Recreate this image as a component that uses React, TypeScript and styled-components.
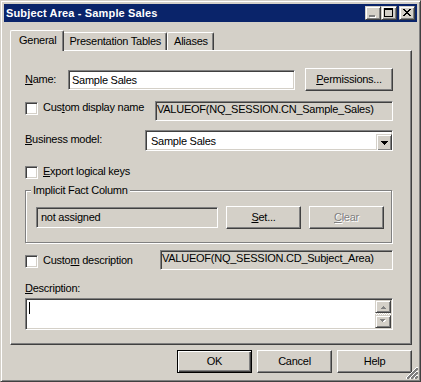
import React from "react";
import styled, { createGlobalStyle, css } from "styled-components";

const FACE = "#D4D0C8";
const SHADOW = "#808080";
const DARK = "#404040";

const GlobalStyle = createGlobalStyle`
  html, body { margin: 0; padding: 0; background: ${FACE}; }
  body {
    font-family: "Liberation Sans", Arial, sans-serif;
    font-size: 11px;
    line-height: 13px;
    letter-spacing: -0.25px;
    color: #000;
  }
  *, *::before, *::after { box-sizing: border-box; }
`;

const raisedBtn = css`
  border: 1px solid;
  border-color: #fff ${DARK} ${DARK} #fff;
  box-shadow: inset -1px -1px ${SHADOW};
`;

const raisedSmall = css`
  border: 1px solid;
  border-color: ${FACE} ${DARK} ${DARK} ${FACE};
  box-shadow: inset 1px 1px #fff, inset -1px -1px ${SHADOW};
`;

const sunken = css`
  border: 1px solid;
  border-color: ${SHADOW} #fff #fff ${SHADOW};
  box-shadow: inset 1px 1px ${DARK}, inset -1px -1px ${FACE};
`;

const Window = styled.div`
  position: relative;
  width: 421px;
  height: 382px;
  background: ${FACE};
  border: 1px solid;
  border-color: ${FACE} ${DARK} ${DARK} ${FACE};
  box-shadow: inset 1px 1px #fff, inset -1px -1px ${SHADOW};
  padding: 3px;
  display: flex;
  flex-direction: column;
`;

const TitleBar = styled.div`
  height: 18px;
  flex: none;
  background: #0a246a;
  display: flex;
  align-items: center;
  padding: 0 2px;
`;

const Title = styled.span`
  flex: 1;
  color: #fff;
  font-weight: bold;
  font-size: 11px;
  letter-spacing: 0.15px;
  white-space: nowrap;
`;

const CaptionBtn = styled.div<{ $ml?: number }>`
  width: 16px;
  height: 14px;
  margin-left: ${(p) => p.$ml ?? 0}px;
  background: ${FACE};
  ${raisedSmall}
  svg { display: block; }
`;

const Body = styled.div`
  flex: 1;
  display: flex;
  flex-direction: column;
  padding: 8px 5px 5px 6px;
`;

const TabStrip = styled.div`
  position: relative;
  z-index: 1;
  display: flex;
  align-items: flex-end;
  height: 20px;
  padding-left: 2px;
  flex: none;
`;

const Tab = styled.div<{ $active?: boolean }>`
  position: relative;
  height: 18px;
  padding: 0 5px 0 6px;
  display: flex;
  align-items: center;
  white-space: nowrap;
  background: ${FACE};
  border-top: 1px solid #fff;
  border-left: 1px solid #fff;
  border-right: 1px solid ${DARK};
  box-shadow: inset -1px 0 ${SHADOW};
  border-radius: 2px 2px 0 0;
  ${(p) =>
    p.$active &&
    css`
      z-index: 2;
      height: 21px;
      margin: 0 -2px -1px -2px;
      padding: 0 7px 2px 8px;
    `}
`;

const Panel = styled.div`
  height: 295px;
  flex: none;
  border: 1px solid;
  border-color: #fff ${DARK} ${DARK} #fff;
  box-shadow: inset -1px -1px ${SHADOW};
  padding: 17px 18px 0 14px;
  display: flex;
  flex-direction: column;
`;

const Row = styled.div<{ $mt: number; $h: number; $align?: string }>`
  display: flex;
  align-items: ${(p) => p.$align ?? "center"};
  margin-top: ${(p) => p.$mt}px;
  height: ${(p) => p.$h}px;
  flex: none;
`;

const Label = styled.div<{ $w?: number; $mt?: number }>`
  width: ${(p) => (p.$w ? `${p.$w}px` : "auto")};
  flex: none;
  white-space: nowrap;
  margin-top: ${(p) => p.$mt ?? 0}px;
`;

const Field = styled.div<{ $w?: number; $h: number; $white?: boolean; $pl: number; $pt?: number }>`
  ${sunken}
  flex: ${(p) => (p.$w ? "none" : "1")};
  width: ${(p) => (p.$w ? `${p.$w}px` : "auto")};
  height: ${(p) => p.$h}px;
  background: ${(p) => (p.$white ? "#fff" : FACE)};
  padding: ${(p) => p.$pt ?? 2}px 1px 0 ${(p) => p.$pl}px;
  white-space: nowrap;
  overflow: hidden;
  display: flex;
  align-items: flex-start;
`;

const FieldText = styled.span`
  flex: 1;
  overflow: hidden;
`;

const Check = styled.div<{ $mt?: number }>`
  ${sunken}
  width: 13px;
  height: 13px;
  flex: none;
  background: #fff;
  margin-top: ${(p) => p.$mt ?? 0}px;
  margin-right: 5px;
`;

const CheckGroup = styled.div<{ $w?: number }>`
  display: flex;
  align-items: flex-start;
  width: ${(p) => (p.$w ? `${p.$w}px` : "auto")};
  flex: none;
`;

const Button = styled.div<{ $w?: number; $default?: boolean; $disabled?: boolean }>`
  ${raisedBtn}
  width: ${(p) => p.$w ?? 75}px;
  height: 23px;
  flex: none;
  display: flex;
  align-items: center;
  justify-content: center;
  background: ${FACE};
  padding-bottom: 1px;
  ${(p) =>
    p.$default &&
    css`
      border: 1px solid #000;
      box-shadow: inset 1px 1px #fff, inset -1px -1px ${DARK}, inset -2px -2px ${SHADOW};
    `}
  ${(p) =>
    p.$disabled &&
    css`
      color: ${SHADOW};
      text-shadow: 1px 1px #fff;
    `}
`;

const Spacer = styled.div<{ $w: number }>`
  width: ${(p) => p.$w}px;
  flex: none;
`;

const DropBtn = styled.div`
  ${raisedSmall}
  width: 16px;
  height: 17px;
  flex: none;
  margin-top: -1px;
  margin-right: -1px;
  background: ${FACE};
  display: flex;
  align-items: center;
  justify-content: center;
`;

const Group = styled.fieldset`
  margin: 5px 0 0 0;
  width: 367px;
  flex: none;
  border: 1px solid ${SHADOW};
  box-shadow: inset 1px 1px #fff, 1px 1px #fff;
  padding: 9px 7px 13px 10px;
  min-width: 0;
`;

const Legend = styled.legend`
  padding: 0 2px;
  margin-left: -5px;
  background: ${FACE};
  line-height: 13px;
`;

const GroupRow = styled.div`
  display: flex;
  align-items: center;
  height: 23px;
  gap: 8px;
`;

const TextArea = styled.div`
  ${sunken}
  margin-top: 3px;
  height: 32px;
  flex: none;
  background: #fff;
  display: flex;
  padding: 2px 1px 1px 2px;
`;

const TextBody = styled.div`
  flex: 1;
  padding: 1px 0 0 1px;
`;

const Caret = styled.div`
  width: 1px;
  height: 12px;
  background: #000;
`;

const ScrollCol = styled.div`
  width: 16px;
  flex: none;
  display: flex;
  flex-direction: column;
  margin-top: -1px;
`;

const ScrollBtn = styled.div`
  ${raisedSmall}
  height: 13px;
  background: ${FACE};
  display: flex;
  align-items: center;
  justify-content: center;
`;

const ScrollTrack = styled.div`
  height: 2px;
  background-color: #fff;
  background-image: linear-gradient(45deg, ${FACE} 25%, transparent 25%, transparent 75%, ${FACE} 75%),
    linear-gradient(45deg, ${FACE} 25%, transparent 25%, transparent 75%, ${FACE} 75%);
  background-size: 2px 2px;
  background-position: 0 0, 1px 1px;
`;

const Footer = styled.div`
  display: flex;
  justify-content: flex-end;
  gap: 5px;
  margin-top: 5px;
  height: 23px;
  flex: none;
`;

const Grip = styled.svg`
  position: absolute;
  right: 2px;
  bottom: 2px;
  display: block;
`;

const Px: React.FC<{ x: number; y: number; w: number; h: number; c: string }> = ({ x, y, w, h, c }) => (
  <rect x={x} y={y} width={w} height={h} fill={c} />
);

const MinGlyph = () => (
  <svg width="14" height="12" shapeRendering="crispEdges">
    <Px x={4} y={9} w={6} h={2} c="#fff" />
    <Px x={3} y={8} w={6} h={2} c={SHADOW} />
  </svg>
);

const MaxGlyph = () => (
  <svg width="14" height="12" shapeRendering="crispEdges">
    <Px x={2} y={1} w={9} h={2} c="#000" />
    <Px x={2} y={1} w={1} h={9} c="#000" />
    <Px x={10} y={1} w={1} h={9} c="#000" />
    <Px x={2} y={9} w={9} h={1} c="#000" />
  </svg>
);

const CloseGlyph = () => {
  const rows: [number, number][][] = [
    [[0, 2], [6, 2]],
    [[1, 2], [5, 2]],
    [[2, 4]],
    [[3, 2]],
    [[2, 4]],
    [[1, 2], [5, 2]],
    [[0, 2], [6, 2]],
  ];
  return (
    <svg width="14" height="12" shapeRendering="crispEdges">
      {rows.map((r, y) => r.map(([x, w], i) => <Px key={`${y}-${i}`} x={x + 3} y={y + 2} w={w} h={1} c="#000" />))}
    </svg>
  );
};

const Arrow: React.FC<{ down?: boolean; color: string }> = ({ down, color }) => (
  <svg width="7" height="4" shapeRendering="crispEdges">
    {[0, 1, 2, 3].map((i) => (
      <Px key={i} x={down ? i : 3 - i} y={i} w={down ? 7 - 2 * i : 7 - 2 * (3 - i)} h={1} c={color} />
    ))}
  </svg>
);

const SmallArrow: React.FC<{ down?: boolean }> = ({ down }) => (
  <svg width="7" height="5" shapeRendering="crispEdges">
    {down ? (
      <>
        <Px x={1} y={1} w={5} h={1} c="#fff" />
        <Px x={2} y={2} w={3} h={1} c="#fff" />
        <Px x={0} y={0} w={5} h={1} c={SHADOW} />
        <Px x={1} y={1} w={3} h={1} c={SHADOW} />
        <Px x={2} y={2} w={1} h={1} c={SHADOW} />
      </>
    ) : (
      <>
        <Px x={3} y={2} w={1} h={1} c={SHADOW} />
        <Px x={2} y={3} w={3} h={1} c={SHADOW} />
        <Px x={1} y={4} w={5} h={1} c={SHADOW} />
      </>
    )}
  </svg>
);

export default function App() {
  return (
    <>
      <GlobalStyle />
      <Window>
        <TitleBar>
          <Title>Subject Area - Sample Sales</Title>
          <CaptionBtn>
            <MinGlyph />
          </CaptionBtn>
          <CaptionBtn>
            <MaxGlyph />
          </CaptionBtn>
          <CaptionBtn $ml={2}>
            <CloseGlyph />
          </CaptionBtn>
        </TitleBar>
        <Body>
          <TabStrip>
            <Tab $active>General</Tab>
            <Tab>Presentation Tables</Tab>
            <Tab>Aliases</Tab>
          </TabStrip>
          <Panel>
            <Row $mt={0} $h={23}>
              <Label $w={43}>
                <u>N</u>ame:
              </Label>
              <Field $h={20} $white $pl={3} $pt={3}>
                <FieldText>Sample Sales</FieldText>
              </Field>
              <Spacer $w={10} />
              <Button $w={88}>
                <span>
                  <u>P</u>ermissions...
                </span>
              </Button>
            </Row>
            <Row $mt={10} $h={20} $align="flex-start">
              <CheckGroup $w={130}>
                <Check $mt={1} />
                <Label $mt={0}>
                  Cus<u>t</u>om display name
                </Label>
              </CheckGroup>
              <Field $h={20} $pl={1} $pt={1}>
                <FieldText>VALUEOF(NQ_SESSION.CN_Sample_Sales)</FieldText>
              </Field>
            </Row>
            <Row $mt={9} $h={21} $align="flex-start">
              <Label $w={120} $mt={3}>
                <u>B</u>usiness model:
              </Label>
              <Field $h={21} $white $pl={5} $pt={4}>
                <FieldText>Sample Sales</FieldText>
                <DropBtn>
                  <Arrow down color="#000" />
                </DropBtn>
              </Field>
            </Row>
            <Row $mt={15} $h={13} $align="flex-start">
              <CheckGroup>
                <Check />
                <Label $mt={-1}>
                  <u>E</u>xport logical keys
                </Label>
              </CheckGroup>
            </Row>
            <Group>
              <Legend>Implicit Fact Column</Legend>
              <GroupRow>
                <Field $h={21} $pl={4} $pt={3}>
                  <FieldText>not assigned</FieldText>
                </Field>
                <Button>
                  <span>
                    <u>S</u>et...
                  </span>
                </Button>
                <Button $disabled>
                  <span>
                    <u>C</u>lear
                  </span>
                </Button>
              </GroupRow>
            </Group>
            <Row $mt={7} $h={20} $align="flex-start">
              <CheckGroup $w={135}>
                <Check $mt={5} />
                <Label $mt={4}>
                  Custo<u>m</u> description
                </Label>
              </CheckGroup>
              <Field $h={20} $pl={1} $pt={1}>
                <FieldText>VALUEOF(NQ_SESSION.CD_Subject_Area)</FieldText>
              </Field>
            </Row>
            <Row $mt={12} $h={13}>
              <Label>
                <u>D</u>escription:
              </Label>
            </Row>
            <TextArea>
              <TextBody>
                <Caret />
              </TextBody>
              <ScrollCol>
                <ScrollBtn>
                  <SmallArrow />
                </ScrollBtn>
                <ScrollTrack />
                <ScrollBtn>
                  <SmallArrow down />
                </ScrollBtn>
              </ScrollCol>
            </TextArea>
          </Panel>
          <Footer>
            <Button $default>OK</Button>
            <Button>Cancel</Button>
            <Button>Help</Button>
          </Footer>
        </Body>
        <Grip width="13" height="13" shapeRendering="crispEdges">
          {[0, 4, 8].map((o) => (
            <g key={o}>
              <line x1={o + 1} y1={12.5} x2={12.5} y2={o + 1} stroke="#fff" strokeWidth={1} />
              <line x1={o + 2} y1={12.5} x2={12.5} y2={o + 2} stroke={SHADOW} strokeWidth={1} />
              <line x1={o + 3} y1={12.5} x2={12.5} y2={o + 3} stroke={SHADOW} strokeWidth={1} />
            </g>
          ))}
        </Grip>
      </Window>
    </>
  );
}
